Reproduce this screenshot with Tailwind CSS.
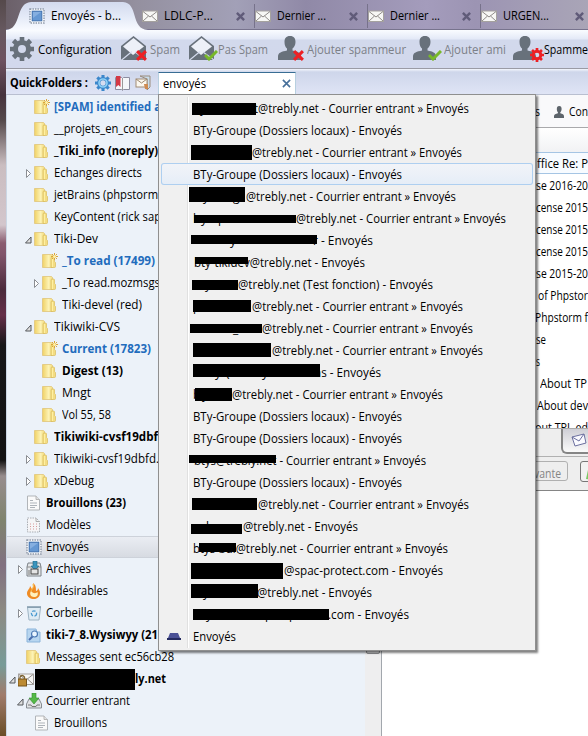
<!DOCTYPE html>
<html lang="fr">
<head>
<meta charset="utf-8">
<title>Courrier</title>
<script src="https://cdn.jsdelivr.net/npm/@tailwindcss/browser@4"></script>
</head>
<body class="w-[588px] h-[736px] overflow-hidden font-['Open_Sans','Noto_Sans',sans-serif] text-[12px] leading-[22px] text-black">
<svg class="absolute w-0 h-0">
  <defs>
    <linearGradient id="gold" x1="0" x2="1"><stop offset="0" stop-color="#f0d164"/><stop offset=".6" stop-color="#fcf2b4"/><stop offset="1" stop-color="#f3dc7d"/></linearGradient>
    <linearGradient id="tabfill" x1="0" x2="0" y1="0" y2="1"><stop offset="0" stop-color="#d3daee"/><stop offset=".5" stop-color="#e3e9f7"/><stop offset="1" stop-color="#f8faff"/></linearGradient>
  </defs>
  <symbol id="folder" viewBox="0 0 16 16"><path d="M.5 1.500h9l1 1v12H.5z" fill="url(#gold)" stroke="#dfc57a" stroke-width=".8"/><path d="M9 9V5q0-1 1-1h1.500q1 0 1 1v3.500l1 1v4q0 1-1 1H9z" fill="#f3dc83" stroke="#d9bc5c" stroke-width=".7"/><path d="M10.500 5v9" stroke="#fff0a0"/></symbol>
  <symbol id="foldernew" viewBox="0 0 16 16"><use href="#folder"/><path d="M12.500 0v7M9 3.500h7M10 1l5 5M15 1l-5 5" stroke="#dca53b" stroke-width="1"/><circle cx="12.500" cy="3.500" r="1.500" fill="#fff3ab"/></symbol>
  <symbol id="draft" viewBox="0 0 16 16"><path d="M1.500 1h8.500l3.500 3.500V15h-12z" fill="#fafafa" stroke="#b1b5b9"/><path d="M10 1v3.500h3.500" fill="#e4e4e4" stroke="#aaa" stroke-width=".8"/><path d="M4 5.500h3M4 8h7M4 10.500h7M4 12.500h5" stroke="#aeb4ba"/></symbol>
  <symbol id="template" viewBox="0 0 16 16"><path d="M1.500 1h8.500l3.500 3.500V15h-12z" fill="#f5f5f7" stroke="#a9adb3" stroke-dasharray="1.500 1"/><path d="M4 7h7M4 9.500h7M4 12h7" stroke="#d99a9a" stroke-dasharray="1 2"/><path d="M10 1v3.500h3.500" fill="none" stroke="#aaa"/></symbol>
  <symbol id="stamp" viewBox="0 0 16 16"><rect x="1" y="1" width="14" height="14" fill="#f8f9fb" stroke="#8e98a8" stroke-width="1.400" stroke-dasharray="1.400 1.100"/><rect x="3.200" y="3.200" width="9.600" height="9.600" fill="#6598d3" stroke="#3e70ae"/><path d="M4 4h8L4 10z" fill="#85afe0"/></symbol>
  <symbol id="archive" viewBox="0 0 16 16"><path d="M2 2h12l1 4v9H1V6z" fill="#e5e8ea" stroke="#7c8288"/><path d="M1 6h14" stroke="#888"/><path d="M7 0h4v5h2l-4 4-4-4h2z" fill="#3a94bd" stroke="#23647f" stroke-width=".6"/><rect x="5" y="8" width="7" height="5" fill="#e4e4e4" stroke="#444"/><path d="M3 9v5" stroke="#777"/></symbol>
  <symbol id="flame" viewBox="0 0 16 16"><path d="M7 0c1 3 0 4-1 6C5 5 5 4 4 3c0 3-3 4-3 7.500C1 14 4.500 16 8 16s6-2.500 6-6c0-2-1-3.500-2-5 0 2-1 3-2 3 0-3 0-6-3-8z" fill="#ef8b24"/><path d="M5 8c-2 3 0 6 3 6s4.500-2 3.500-5c-1.500 1.500-4 2-6.500-1z" fill="#fff1be"/><path d="M7 1c1 4-1 5-2 7" stroke="#ffc44b" fill="none"/></symbol>
  <symbol id="trash" viewBox="0 0 16 16"><path d="M1.500 2.500h13L13 15H3z" fill="#deebf4" stroke="#9eb4c4"/><path d="M1 2h14" stroke="#8199aa" stroke-width="1.500"/><circle cx="8" cy="8.500" r="2.600" fill="none" stroke="#4b9bd1" stroke-width="1.300" stroke-dasharray="3.500 1.500"/></symbol>
  <symbol id="search" viewBox="0 0 16 16"><path d="M1 2h9l1 3h3v10H1z" fill="#b8d6f0" stroke="#8bb4da"/><circle cx="8.500" cy="7" r="3" fill="#eaf5ff" stroke="#4c79b4" stroke-width="1.200"/><path d="M6.500 9.500L3 13" stroke="#4c6fae" stroke-width="2"/></symbol>
  <symbol id="mail" viewBox="0 0 16 16"><rect x=".5" y="3" width="15" height="10.500" fill="#f7f7f5" stroke="#a5a29f"/><path d="M1 3.500l7 5.500 7-5.500M1 13l5.500-5M15 13L9.500 8" fill="none" stroke="#8f8b89"/></symbol>
  <symbol id="lockmail" viewBox="0 0 16 16"><use href="#mail"/><rect x="0" y="8" width="8.500" height="7" fill="#bc8a32" stroke="#75531b"/><path d="M2 8V6q2-3 4.500 0v2" fill="none" stroke="#7d622f" stroke-width="1.300"/></symbol>
  <symbol id="inbox" viewBox="0 0 16 16"><path d="M3 6h10l2.500 5v4H.5v-4z" fill="#e1e3e5" stroke="#878d93"/><path d="M2 12h3l1 1.500h4L11 12h3" fill="none" stroke="#777"/><path d="M6 0h4v5h3l-5 6-5-6h3z" fill="#55b948" stroke="#308a2c" stroke-width=".6"/></symbol>
  <symbol id="gear" viewBox="0 0 24 24"><circle cx="12" cy="12" r="6.500" fill="none" stroke="currentColor" stroke-width="5"/><path d="M12 0v5M12 19v5M0 12h5M19 12h5M3.500 3.500l3.500 3.500M17 17l3.500 3.500M20.500 3.500L17 7M7 17l-3.500 3.500" stroke="currentColor" stroke-width="4.600"/></symbol>
  <symbol id="openmail" viewBox="0 0 28 26"><path d="M0 10L12.500 0 25 10v14H0z" fill="#68717b"/><path d="M2 10.500L12.500 2 23 10.500 12 19z" fill="#edf0f8"/><path d="M0 24.500l11-9M25 24L14 16" stroke="#d5dcee" stroke-width="1.200"/></symbol>
  <symbol id="person" viewBox="0 0 28 26"><path d="M12 0c4 0 5.500 2.500 5.500 6 0 3-1.500 5.500-3 6.500v2c5 1 8.500 2 8.500 6V24H0v-3.500c0-4 4-5 9-6v-2C7.500 11.500 6.500 9 6.500 6 6.500 2.500 8 0 12 0z" fill="#68717b"/></symbol>
  <symbol id="cross" viewBox="0 0 10 10"><path d="M1 1l8 8M9 1L1 9" stroke="currentColor" stroke-width="2.700"/></symbol>
  <symbol id="check" viewBox="0 0 14 11"><path d="M1 5l4 4 8-8" stroke="#78b829" stroke-width="3" fill="none"/></symbol>
</svg>

<div class="relative flex h-full">
  <div class="w-[6px] shrink-0 bg-[linear-gradient(#55494b_0,#66585f_30px,#6e5260_60px,#46333d_95px,#54494b_120px,#cabdc0_165px,#d3c6cc_225px,#8a5c70_243px,#80546a_255px,#4b2b3c_290px,#652f49_315px,#171719_345px,#121212_460px,#978d8e_476px,#7f846e_520px,#817181_565px,#8d8a83_610px,#779b98_665px,#a07b6b_695px,#6a4e27_736px)]"></div>
  <main class="flex flex-col flex-1 min-w-0">
    <nav class="relative h-[30px] bg-[linear-gradient(90deg,#6b6069_0,#94909f_130px,#a2a0b7_230px,#9089a7_300px,#a49cbc_420px,#9c94b3_470px,#aaa6b7_588px)] border-b border-[#77738d]">
      <svg class="absolute left-0 top-0" width="142" height="30"><path d="M0 30C16 29 9 3 25 2H117C133 3 124 29 142 30z" fill="url(#tabfill)"/></svg>
      <div id="tabs" class="relative flex h-full pl-[24px]"></div>
    </nav>

    <div id="toolbar" class="relative flex items-center h-[39px] bg-[linear-gradient(#fafcff_0,#e3e9f7_9px,#d2d9ec_10px,#d2d8ec_100%)] border-b border-[#9a9ba5]"></div>

    <div class="flex h-[26px] pt-[3px] bg-[linear-gradient(#f3f6fd_0,#ced6ea_3px,#dfe4f5_100%)] border-b border-[#b9bfd0]">
      <div class="flex items-center w-[152px] pl-[4px] font-bold"><span data-w="78">QuickFolders :</span>
        <svg class="ml-[7px] shrink-0" width="16" height="16" viewBox="0 0 24 24"><g class="text-[#3b87cb]"><use href="#gear"/></g><circle cx="12" cy="12" r="6" fill="none" stroke="#8fd0f6" stroke-width="2.500"/></svg>
        <svg class="ml-[4px] shrink-0" width="15" height="15" viewBox="0 0 15 15"><path d="M.5 1.500h6l1 1 1-1h6v12h-6l-1 1-1-1h-6z" fill="#f5f6fa" stroke="#8c8da0"/><path d="M1 0h4.500v11L3.300 9 1 11z" fill="#d43845"/><path d="M7.500 2v12" stroke="#999"/></svg>
        <svg class="ml-[5px] shrink-0" width="16" height="16" viewBox="0 0 16 16"><path d="M5 1h10v11l-3 3V4z" fill="#c9ddec" stroke="#9b8c7c"/><rect x="1" y="4" width="11" height="8" fill="#fcf8ef" stroke="#a18c74"/><path d="M1 4l5.500 4L12 4" fill="none" stroke="#a18c74"/><path d="M9 9h4v5h-3z" fill="#cf8b51"/></svg>
      </div>
      <div class="flex items-center w-[138px] h-[23px] bg-white border border-[#b8d0e0] border-t-[#386d94] pl-[4px] pr-[4px] justify-between"><span data-w="43">envoyés</span>
        <svg class="text-[#47709a]" width="9" height="9" viewBox="0 0 10 10"><path d="M1 1l8 8M9 1L1 9" stroke="currentColor" stroke-width="1.800"/></svg></div>
    </div>

    <div class="flex flex-1 min-h-0">
      <aside class="flex w-[376px] shrink-0 bg-[#ecf2f9] border-l border-r border-l-[#cbd6e4] border-r-[#a2a7ad]">
        <div id="tree" class="flex-1 min-w-0 overflow-hidden pt-[1px]"></div>
        <div class="w-[16px] bg-[#eeeeef] flex flex-col"><div class="h-[559px] mx-px bg-[#d4d5d7] border border-[#8e9093] rounded-xs"></div></div>
      </aside>
      <section class="flex-1 min-w-0 bg-white overflow-hidden whitespace-nowrap">
        <div class="flex items-center h-[33px] bg-[#f9f9fb] border-b border-[#a9a9ac] pt-[2px] pl-[153px]"><span data-w="5">s</span>
          <svg class="ml-[14px] shrink-0" width="10" height="12" viewBox="0 0 23 24" preserveAspectRatio="none"><path d="M12 0c4 0 5.500 2.500 5.500 6 0 3-1.500 5.500-3 6.500v2c5 1 8.500 2 8.500 6V24H0v-3.500c0-4 4-5 9-6v-2C7.500 11.500 6.500 9 6.500 6 6.500 2.500 8 0 12 0z" fill="#5d646b"/></svg>
          <span class="ml-[5px]" data-w="19">Con</span></div>
        <div class="h-[24px] bg-[linear-gradient(#fff,#f1f2f4)]"></div>
        <div id="mails" class="h-[276px] overflow-hidden"></div>
        <div class="h-[29px] bg-[#eeeeee] border-t border-[#aaaaaa] border-b border-b-[#b1b1b1] pl-[179px]">
          <div class="h-[25px] w-[60px] border-l-2 border-b-2 border-[#858585] rounded-bl-[6px] bg-[linear-gradient(#cfcfd6,#fafafa)] pl-[8px] pt-[4px]"><svg width="16" height="14" viewBox="0 0 16 14"><path d="M1 4l12-3 2 9-11 3z" fill="#fafaff" stroke="#6c70a0"/><path d="M1 4l7 4 5-7" fill="none" stroke="#6c70a0"/></svg></div>
        </div>
        <div class="flex h-[34px] pt-[4px] bg-[#eeeeee] border-b border-[#858585]"><div class="flex justify-end shrink-0 w-[186px] h-[20px] border border-[#b0b0b0] rounded-[3px] leading-[23px] pr-[6px] text-[#858585]"><span data-w="27">vante</span></div>
          <div class="ml-[12px] shrink-0 w-[40px] h-[21px] border border-[#777] rounded-[3px] bg-[#f2f2f2] pt-[5px] pl-[5px]"><svg width="12" height="13"><path d="M0 12L2 3l10-3v13z" fill="#79c963"/></svg></div></div>
      </section>
    </div>
  </main>

  <div id="menu" class="absolute left-[158px] top-[94px] w-[378px] h-[557px] bg-[#f0f0f0] border border-[#8f8f8f] pt-[2px] px-[2px] leading-[24px] shadow-[2px_2px_2px_rgba(0,0,0,0.5)]">
    <div class="absolute left-[28px] top-[2px] bottom-[2px] w-[2px] bg-[#e0e0e0] border-r border-white"></div>
  </div>
</div>

<script>
const html = (id, s) => document.getElementById(id).insertAdjacentHTML('beforeend', s);
const icon = (n, c = '') => `<svg class="shrink-0 ${c}" width="16" height="16"><use href="#${n}" width="16" height="16"/></svg>`;

const tabs = [['Envoyés - b…',70,'stamp'],['LDLC-P…',49,'mail'],['Dernier …',49,'mail'],['Dernier …',50,'mail'],['URGEN…',46,'mail']];
html('tabs', tabs.map(([t, w, i], n) => `<div class="${n ? 'flex items-center w-[113px] shrink-0 pt-[3px]' : 'flex items-center w-[112px] shrink-0 pt-[3px] -ml-[1px] mr-[1px]'}">${icon(i)}<span class="ml-[6px] leading-[20px]" data-w="${w}">${t.replace('…', '...')}</span>${n ? '<svg class="ml-auto mr-[9px] text-[#605b79]" width="9" height="9"><use href="#cross" width="9" height="9"/></svg><i class="w-px h-[24px] bg-[#77728b]"></i>' : ''}</div>`).join(''));

const badge = {
  x: '<svg class="absolute left-[15px] top-[14px] text-[#ed2024]" width="11" height="11"><use href="#cross" width="11" height="11"/></svg>',
  v: '<svg class="absolute left-[15px] top-[14px]" width="14" height="11"><use href="#check" width="14" height="11"/></svg>',
  g: '<svg class="absolute left-[17px] top-[12px] text-[#ed2024]" width="14" height="14"><use href="#gear" width="14" height="14"/></svg>'
};
const tools = [['gear','','Configuration',4,32,74,0],['openmail','x','Spam',115,144,30,1],['openmail','v','Pas Spam',183,212,50,1],['person','x','Ajouter spammeur',272,301,99,1],['person','v','Ajouter ami',407,438,62,1],['person','g','Spamme',507,538,44,0]];
let at = 0;
html('toolbar', tools.map(([i, b, t, x, tx, w, off]) => {
  const left = x - at; at = tx + w;
  return `<span class="relative shrink-0 text-[#68717b]" style="margin-left:${left}px;width:${tx - x}px">${i === 'gear' ? '<svg width="24" height="24"><use href="#gear" width="24" height="24"/></svg>' : `<svg width="28" height="26"><use href="#${i}" width="28" height="26"/></svg>`}${badge[b] || ''}</span><span class="${off ? 'pt-[2px] text-[#7c8087]' : 'pt-[2px] text-black'}" data-w="${w}">${t}</span>`;
}).join(''));

// [indent, twisty, icon, label, width, style]
const tree = [
 [3,'','foldernew','[SPAM] identified a',107,'u'],[3,'','folder','__projets_en_cours',98],[3,'','folder','_Tiki_info (noreply)',104,'b'],
 [3,'c','folder','Echanges directs',88],[3,'','folder','jetBrains (phpstorm',104],[3,'','folder','KeyContent (rick sap',107],
 [3,'o','folder','Tiki-Dev',44],[4,'','foldernew','_To read (17499)',93,'u'],[4,'c','folder','_To read.mozmsgs',98],[4,'','folder','Tiki-devel (red)',80],
 [3,'o','folder','Tikiwiki-CVS',66],[4,'','foldernew','Current (17823)',89,'u'],[4,'','folder','Digest (13)',61,'b'],[4,'','folder','Mngt',29],[4,'','folder','Vol 55, 58',49],
 [3,'','folder','Tikiwiki-cvsf19dbf',104,'b'],[3,'c','folder','Tikiwiki-cvsf19dbfd.',105],[3,'c','folder','xDebug',40],
 [2,'','draft','Brouillons (23)',80,'b'],[2,'','template','Modèles',45],[2,'','stamp','Envoyés',43,'s'],[2,'c','archive','Archives',45],
 [2,'','flame','Indésirables',62],[2,'c','trash','Corbeille',47],[2,'','search','tiki-7_8.Wysiwyy (21',112,'b'],[2,'','folder','Messages sent ec56cb28',128],
 [1,'o','lockmail','ly.net',31,'r'],[2,'o','inbox','Courrier entrant',84],[3,'','draft','Brouillons',53]];
const rowClass = {
  u: 'flex items-center h-[22px] font-bold text-[#226cbd]',
  b: 'flex items-center h-[22px] font-bold',
  r: 'flex items-center h-[22px] font-bold',
  s: 'flex items-center h-[22px] bg-[linear-gradient(#eaedf3,#d7dbe2)] border-y border-[#cdd2da]'
};
const twisty = { '': '', c: '<path d="M2.500 2.500v8l4-4z" fill="#fff" stroke="#8b8e93"/>', o: '<path d="M7 4v6H1.500z" fill="#e0e0e0" stroke="#55585c"/>' };
html('tree', tree.map(([d, tw, i, t, w, s]) => `<div class="${rowClass[s] || 'flex items-center h-[22px]'}" style="padding-left:${d * 8 - 7}px"><svg class="shrink-0 mr-[1px]" width="9" height="13">${twisty[tw]}</svg>${icon(i)}${s === 'r' ? '<i class="w-[100px] h-[21px] ml-[1px] bg-black shrink-0"></i>' : '<i class="w-[4px] shrink-0"></i>'}<span data-w="${w}">${t}</span></div>`).join(''));

const mails = [[155,'ffice Re: P',51],[154,'se 2016-20',52],[154,'cense 2015',52],[154,'cense 2015',52],[154,'cense 2015',52],[154,'se 2015-20',52],[156,'of Phpstor',50],[153,'Phpstorm f',53],[154,'se',10],[154,'s',4],[158,'About TP',47],[155,'About dev',51],[153,'out TPL ed',53]];
html('mails', mails.map(([x, t, w], n) => `<div class="${n ? 'flex h-[22px] leading-[24px]' : 'flex h-[22px] border-y border-[#a5c5e4] bg-[#f7fbff] leading-[22px]'}" style="padding-left:${x}px"><span data-w="${w}">${t}</span></div>`).join(''));

const C = ' - Courrier entrant » Envoyés', T = '@trebly.net', E = ' - Envoyés', G = ['BTy-Groupe (Dossiers locaux) - Envoyés', 193, 209];
// [label, x, width, mask [x0, x1, y0, y1], loose glyphs]
const menu = [
 ['t'+T+C,254,215,[192,256,103,115],[['y',200]]], G, [T+C,252,210,[191,252,145,160]], G,
 [T+C,246,210,[189,245,187,202],[['y',203],['g',233]]], [T+C,296,210,[194,296,215,223],[['b',193],['y',201],['p',218]]],
 ['r'+E,313,60,[191,317,235,244],[['y',230]]], ['bty-tikidev'+T+E,194,171,[195,248,257,264]],
 [T+' (Test fonction)'+E,238,195,[192,238,280,290],[['y',205]]], [T+C,252,211,[193,251,300,312],[['p',193]]],
 [T+C,262,211,[190,262,324,333],[['_',233]]], [T+C,272,211,[193,271,343,357]],
 ['ns'+E,314,67,[193,320,364,377],[['y',215],['(',226],['y',262]]], [T+C,232,211,[195,232,388,401],[['b',193],['y',202]]], G, G,
 ['btys'+T+C,194,232,[189,276,455,463]], G, [T+C,258,211,[192,257,498,510]],
 [T+E,243,115,[191,242,524,534],[['b',206]]], ['btys-bui'+T+C,193,255,[199,236,543,552]],
 ['@spac-protect.com'+E,284,159,[191,283,563,579]], [T+E,257,115,[191,258,584,598],[['y',203]]],
 ['.com'+E,328,81,[193,329,609,620],[['y',206],['p',265],['p',289]]], ['Envoyés',193,43]];
html('menu', menu.map(([t, x, w, m, f], n) => {
  const top = 97 + n * 22;
  return `<div class="${n === 3 ? 'relative flex h-[22px] rounded-[3px] shadow-[inset_0_0_0_1px_#aecff0] bg-[linear-gradient(#f2f4f8,#e5edf7)]' : 'relative flex h-[22px]'}" style="padding-left:${x - 161}px"><span data-w="${w}">${t}</span>${(f || []).map(([c, fx]) => `<span class="absolute top-0" style="left:${fx - 161}px">${c}</span>`).join('')}${m ? `<i class="absolute bg-black" style="left:${m[0] - 161}px;width:${m[1] - m[0]}px;top:${m[2] - top}px;height:${m[3] - m[2]}px"></i>` : ''}${n === 24 ? '<svg class="absolute left-[6px] top-[7px]" width="14" height="9"><path d="M3 1h8l2 5H1z" fill="#4b5196"/><path d="M0 6h14v2H0z" fill="#252b60"/></svg>' : ''}</div>`;
}).join(''));

// Condense each label to its assigned width.
function fit() {
  document.querySelectorAll('[data-w]').forEach(e => {
    e.style.cssText = 'display:block;flex:none;white-space:pre;transform:none;transform-origin:0 50%;width:' + e.dataset.w + 'px';
    const r = document.createRange(); r.selectNodeContents(e);
    e.style.transform = 'scaleX(' + e.dataset.w / r.getBoundingClientRect().width + ')';
  });
}
fit();
addEventListener('load', fit);
document.fonts.ready.then(fit);
</script>
</body>
</html>
